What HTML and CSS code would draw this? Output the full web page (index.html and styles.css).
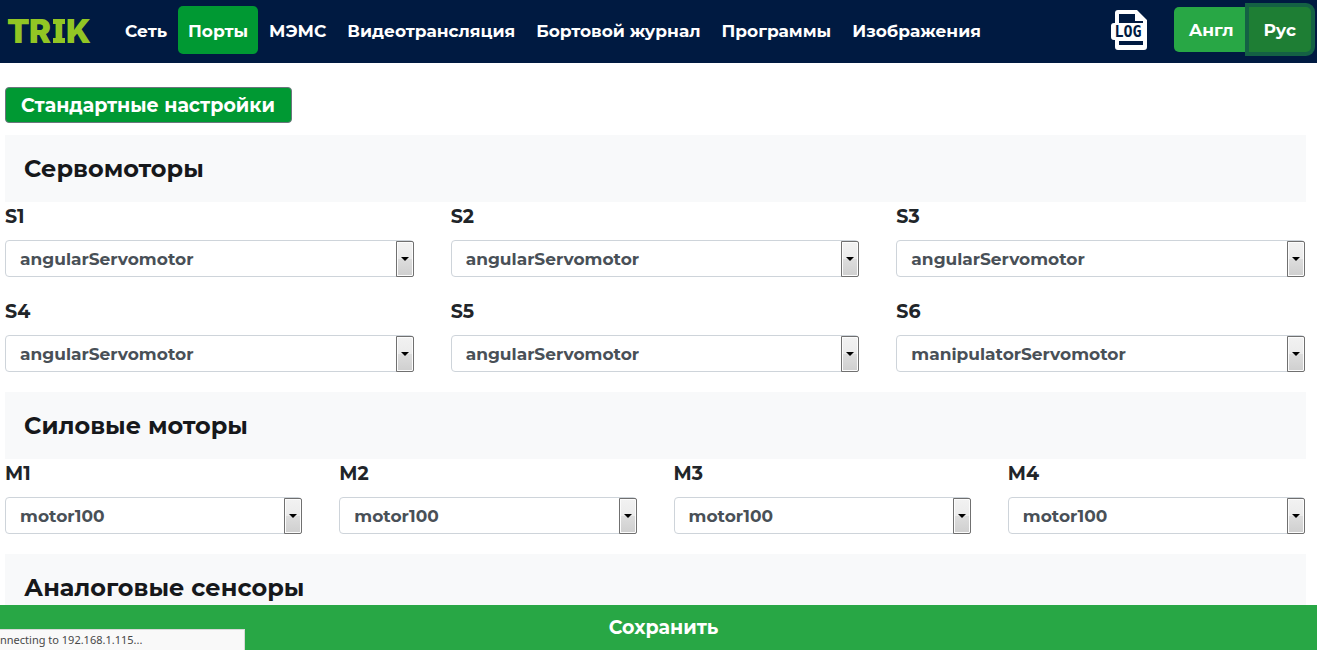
FILE: index.html
```html
<!DOCTYPE html>
<html lang="ru">
<head>
<meta charset="utf-8">
<meta name="viewport" content="width=device-width, initial-scale=1">
<title>TRIK</title>
<link rel="stylesheet" href="styles.css">
</head>
<body>
<header class="topbar">
  <a class="brand" href="#" aria-label="TRIK">
    <svg width="84" height="26" viewBox="0 0 84 26">
      <text class="brand-text" x="-1 21 46 58" y="25">TRIK</text>
      <path class="brand-bars" d="M45 1h12v5H45zM45 20h12v5H45z"/>
    </svg>
  </a>
  <nav class="menu">
    <a class="menu-link" href="#">Сеть</a>
    <a class="menu-link active" href="#">Порты</a>
    <a class="menu-link" href="#">МЭМС</a>
    <a class="menu-link" href="#">Видеотрансляция</a>
    <a class="menu-link" href="#">Бортовой журнал</a>
    <a class="menu-link" href="#">Программы</a>
    <a class="menu-link" href="#">Изображения</a>
  </nav>
  <a class="log" href="#" aria-label="LOG">
    <svg width="38" height="42" viewBox="0 0 38 42">
      <path fill="#fff" fill-rule="evenodd" d="M8 1h19l10 10v27q0 3-3 3H8q-3 0-3-3v-7H4q-3 0-3-3V17q0-3 3-3h1V4q0-3 3-3zM9 5v9h24v-2h-8V5zM9 32v4h24v-4z"/>
      <text class="log-text" x="18" y="28" text-anchor="middle">LOG</text>
    </svg>
  </a>
  <div class="lang">
    <button class="lang-btn" type="button">Англ</button>
    <button class="lang-btn selected" type="button">Рус</button>
  </div>
</header>

<main class="content">
  <button class="defaults" type="button">Стандартные настройки</button>

  <h2 class="section-title">Сервомоторы</h2>
  <div class="grid three">
    <div class="field"><label for="s1">S1</label><div class="picker"><select id="s1"><option>angularServomotor</option></select></div></div>
    <div class="field"><label for="s2">S2</label><div class="picker"><select id="s2"><option>angularServomotor</option></select></div></div>
    <div class="field"><label for="s3">S3</label><div class="picker"><select id="s3"><option>angularServomotor</option></select></div></div>
    <div class="field"><label for="s4">S4</label><div class="picker"><select id="s4"><option>angularServomotor</option></select></div></div>
    <div class="field"><label for="s5">S5</label><div class="picker"><select id="s5"><option>angularServomotor</option></select></div></div>
    <div class="field"><label for="s6">S6</label><div class="picker"><select id="s6"><option>manipulatorServomotor</option></select></div></div>
  </div>

  <h2 class="section-title">Силовые моторы</h2>
  <div class="grid four">
    <div class="field"><label for="m1">M1</label><div class="picker"><select id="m1"><option>motor100</option></select></div></div>
    <div class="field"><label for="m2">M2</label><div class="picker"><select id="m2"><option>motor100</option></select></div></div>
    <div class="field"><label for="m3">M3</label><div class="picker"><select id="m3"><option>motor100</option></select></div></div>
    <div class="field"><label for="m4">M4</label><div class="picker"><select id="m4"><option>motor100</option></select></div></div>
  </div>

  <h2 class="section-title">Аналоговые сенсоры</h2>
</main>

<button class="save" type="button">Сохранить</button>
<div class="status"><span>nnecting to 192.168.1.115...</span></div>
</body>
</html>
```
FILE: styles.css
```css
* { box-sizing: border-box; }
html { scrollbar-width: none; }
body {
  margin: 0;
  background: #fff;
  color: #212529;
  font-family: Montserrat, Inter, sans-serif;
  font-weight: 700;
}
button, select { font: inherit; }

.topbar {
  display: flex;
  align-items: center;
  height: 63px;
  padding: 0 6px 4px 8px;
  background: #001a41;
}
.brand { display: flex; margin-right: 23px; padding-top: 3px; }
.brand svg { overflow: visible; }
.brand-text { font-family: Inter, sans-serif; font-size: 33px; font-weight: 900; fill: #92c624; }
.brand-bars { fill: #92c624; }
.menu { display: flex; flex: 1; gap: 1px; }
.menu-link {
  padding: 13px 10px 11px;
  border-radius: 5px;
  color: #fff;
  font-size: 17px;
  line-height: 24px;
  text-decoration: none;
  white-space: nowrap;
}
.menu-link.active { background: #009933; }
.log { display: flex; margin-right: 26px; }
.log-text { font-family: "DejaVu Sans Mono", monospace; font-size: 15px; font-weight: 700; fill: #001a41; }
.lang { display: flex; }
.lang-btn {
  padding: 2px 15px 0;
  border: 0;
  border-radius: 5px 0 0 5px;
  background: #28a745;
  color: #fff;
  font-size: 17px;
  line-height: 43px;
}
.lang-btn.selected {
  border-radius: 0 5px 5px 0;
  background: #1e7e34;
  box-shadow: 0 0 0 4px #146144;
}

.content { padding: 24px 11px 24px 5px; }
.defaults {
  display: block;
  margin-bottom: 12px;
  padding: 1px 16px 0 15px;
  border: 1px solid #6c757d;
  border-radius: 4px;
  background: #009933;
  color: #fff;
  font-size: 19px;
  line-height: 33px;
}
.section-title {
  margin: 0;
  padding: 19px 19px 18px;
  background: #f8f9fa;
  color: #16181b;
  font-size: 24px;
  line-height: 30px;
}
.grid { display: grid; column-gap: 37px; padding-right: 1px; }
.three { grid-template-columns: repeat(3, 1fr); }
.four { grid-template-columns: repeat(4, 1fr); }
.field { padding-bottom: 20px; }
.field label {
  display: block;
  margin-bottom: 8px;
  font-size: 19px;
  line-height: 30px;
}
.picker { position: relative; }
.picker select {
  display: block;
  width: 100%;
  height: 37px;
  padding: 0 30px 0 14px;
  border: 1px solid #ced4da;
  border-radius: 4px;
  appearance: none;
  background: #fff;
  color: #495057;
  font-size: 17px;
}
.picker::before {
  content: "";
  box-sizing: border-box;
  position: absolute;
  top: 1px;
  right: 0;
  bottom: 0;
  width: 18px;
  border: 1px solid #707070;
  border-radius: 0 2px 2px 0;
  background: linear-gradient(#f2f2f2, #ebebeb 50%, #dddddd 50%, #cfcfcf);
  box-shadow: inset 0 0 0 1px #fcfcfc;
  pointer-events: none;
}
.picker::after {
  content: "";
  position: absolute;
  top: 17px;
  right: 5px;
  border: 4px solid transparent;
  border-top-color: #000;
  border-bottom: 0;
  pointer-events: none;
}

.save {
  position: fixed;
  right: 0;
  bottom: 0;
  left: 0;
  width: 100%;
  padding: 0 10px 0 20px;
  border: 0;
  background: #28a745;
  color: #fff;
  font-size: 19px;
  line-height: 45px;
}
.status {
  position: fixed;
  bottom: 0;
  left: 0;
  width: 245px;
  border: 1px solid #d8d8d8;
  border-width: 1px 1px 0 0;
  background: #f9f9f9;
  color: #484848;
  font-family: "Noto Sans", sans-serif;
  font-size: 11px;
  font-weight: 400;
  line-height: 20px;
}
```
